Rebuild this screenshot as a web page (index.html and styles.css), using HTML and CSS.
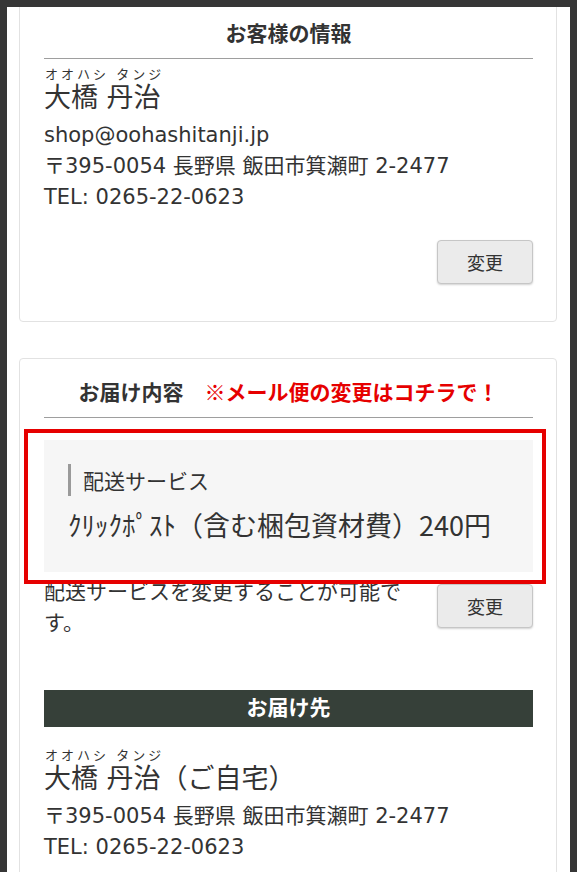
FILE: index.html
```html
<!DOCTYPE html>
<html lang="ja">
<head>
<meta charset="utf-8">
<title>ご注文内容の確認</title>
<link rel="stylesheet" href="styles.css">
</head>
<body>
<div class="viewer">
  <div class="panel">
    <section class="card card-first">
      <h2 class="card-title">お客様の情報</h2>
      <div class="person">
        <div class="kana">オオハシ タンジ</div>
        <div class="name">大橋 丹治</div>
        <div class="lines">
          <p class="line">shop@oohashitanji.jp</p>
          <p class="line">〒395-0054 長野県 飯田市箕瀬町 2-2477</p>
          <p class="line">TEL: 0265-22-0623</p>
        </div>
      </div>
      <div class="actions"><button class="btn" type="button">変更</button></div>
    </section>

    <section class="card card-second">
      <h2 class="card-title">お届け内容　<span class="notice">※メール便の変更はコチラで！</span></h2>
      <div class="service">
        <div class="service-label">配送サービス</div>
        <div class="service-value">ｸﾘｯｸﾎﾟｽﾄ（含む梱包資材費）240円</div>
        <div class="highlight"></div>
      </div>
      <div class="change-row">
        <p class="change-text">配送サービスを変更することが可能です。</p>
        <button class="btn" type="button">変更</button>
      </div>
      <h3 class="bar">お届け先</h3>
      <div class="person person-dest">
        <div class="kana">オオハシ タンジ</div>
        <div class="name">大橋 丹治（ご自宅）</div>
        <div class="lines">
          <p class="line">〒395-0054 長野県 飯田市箕瀬町 2-2477</p>
          <p class="line">TEL: 0265-22-0623</p>
        </div>
      </div>
    </section>
  </div>
</div>
</body>
</html>
```

FILE: styles.css
```css
* { box-sizing: border-box; }

html, body {
  margin: 0;
  padding: 0;
  height: 100%;
}

body {
  background: #363636;
  color: #333;
  font-family: "DejaVu Sans", "Noto Sans CJK JP", sans-serif;
  font-size: 21px;
  overflow: hidden;
}

.viewer {
  height: 100vh;
  padding: 7px 7px 0 7px;
}

.panel {
  background: #fff;
  height: 100%;
  padding: 0 13px 0 12px;
  overflow: hidden;
  display: flow-root;
}

.card {
  background: #fff;
  border: 1px solid #e2e2e2;
  border-radius: 4px;
  padding: 19px 23px 37px 24px;
}

.card-first { margin-top: -8px; }
.card-second { margin-top: 36px; }

.card-title {
  margin: 0;
  font-family: "Noto Sans CJK JP", sans-serif;
  font-size: 21px;
  font-weight: 700;
  line-height: 27px;
  text-align: center;
  color: #333;
  padding-bottom: 12px;
  border-bottom: 1px solid #9e9e9e;
}

.notice { color: #e60000; }

.person { margin-top: 8px; }

.kana {
  font-size: 13px;
  line-height: 16px;
  letter-spacing: 3px;
  padding-left: 1px;
}

.name {
  margin-top: 2px;
  font-size: 27px;
  line-height: 26px;
}

.lines { margin-top: 9px; }

.line {
  margin: 0;
  line-height: 31px;
}

.actions {
  display: flex;
  justify-content: flex-end;
  margin-top: 27px;
}

.btn {
  width: 96px;
  height: 44px;
  background: #ebebeb;
  border: 1px solid #c6c6c6;
  border-radius: 4px;
  box-shadow: 0 1px 2px rgba(0, 0, 0, 0.18);
  font-family: "Noto Sans CJK JP", sans-serif;
  font-size: 18px;
  color: #333;
  padding: 0;
  flex: none;
}

.service {
  position: relative;
  margin-top: 22px;
  background: #f6f6f6;
  padding: 24px 24px 28px 24px;
}

.service-label {
  border-left: 3px solid #9a9a9a;
  padding-left: 12px;
  line-height: 32px;
  font-family: "Noto Sans CJK JP", sans-serif;
}

.service-value {
  margin-top: 11px;
  font-size: 27px;
  line-height: 36px;
  padding-bottom: 1px;
  font-family: "Noto Sans CJK JP", "DejaVu Sans", sans-serif;
}

.highlight {
  position: absolute;
  top: -11px;
  right: -13px;
  bottom: -12px;
  left: -20px;
  border: 4px solid #e60000;
  z-index: 2;
  pointer-events: none;
}

.change-row {
  display: flex;
  align-items: center;
  gap: 23px;
  margin-top: 3px;
}

.change-text {
  flex: 1;
  margin: 0;
  line-height: 31px;
  font-family: "Noto Sans CJK JP", sans-serif;
}

.bar {
  margin: 53px 0 0 0;
  background: #364039;
  color: #fff;
  font-family: "Noto Sans CJK JP", sans-serif;
  font-size: 21px;
  font-weight: 700;
  line-height: 33px;
  padding-bottom: 4px;
  text-align: center;
}

.person-dest { margin-top: 21px; }
```
